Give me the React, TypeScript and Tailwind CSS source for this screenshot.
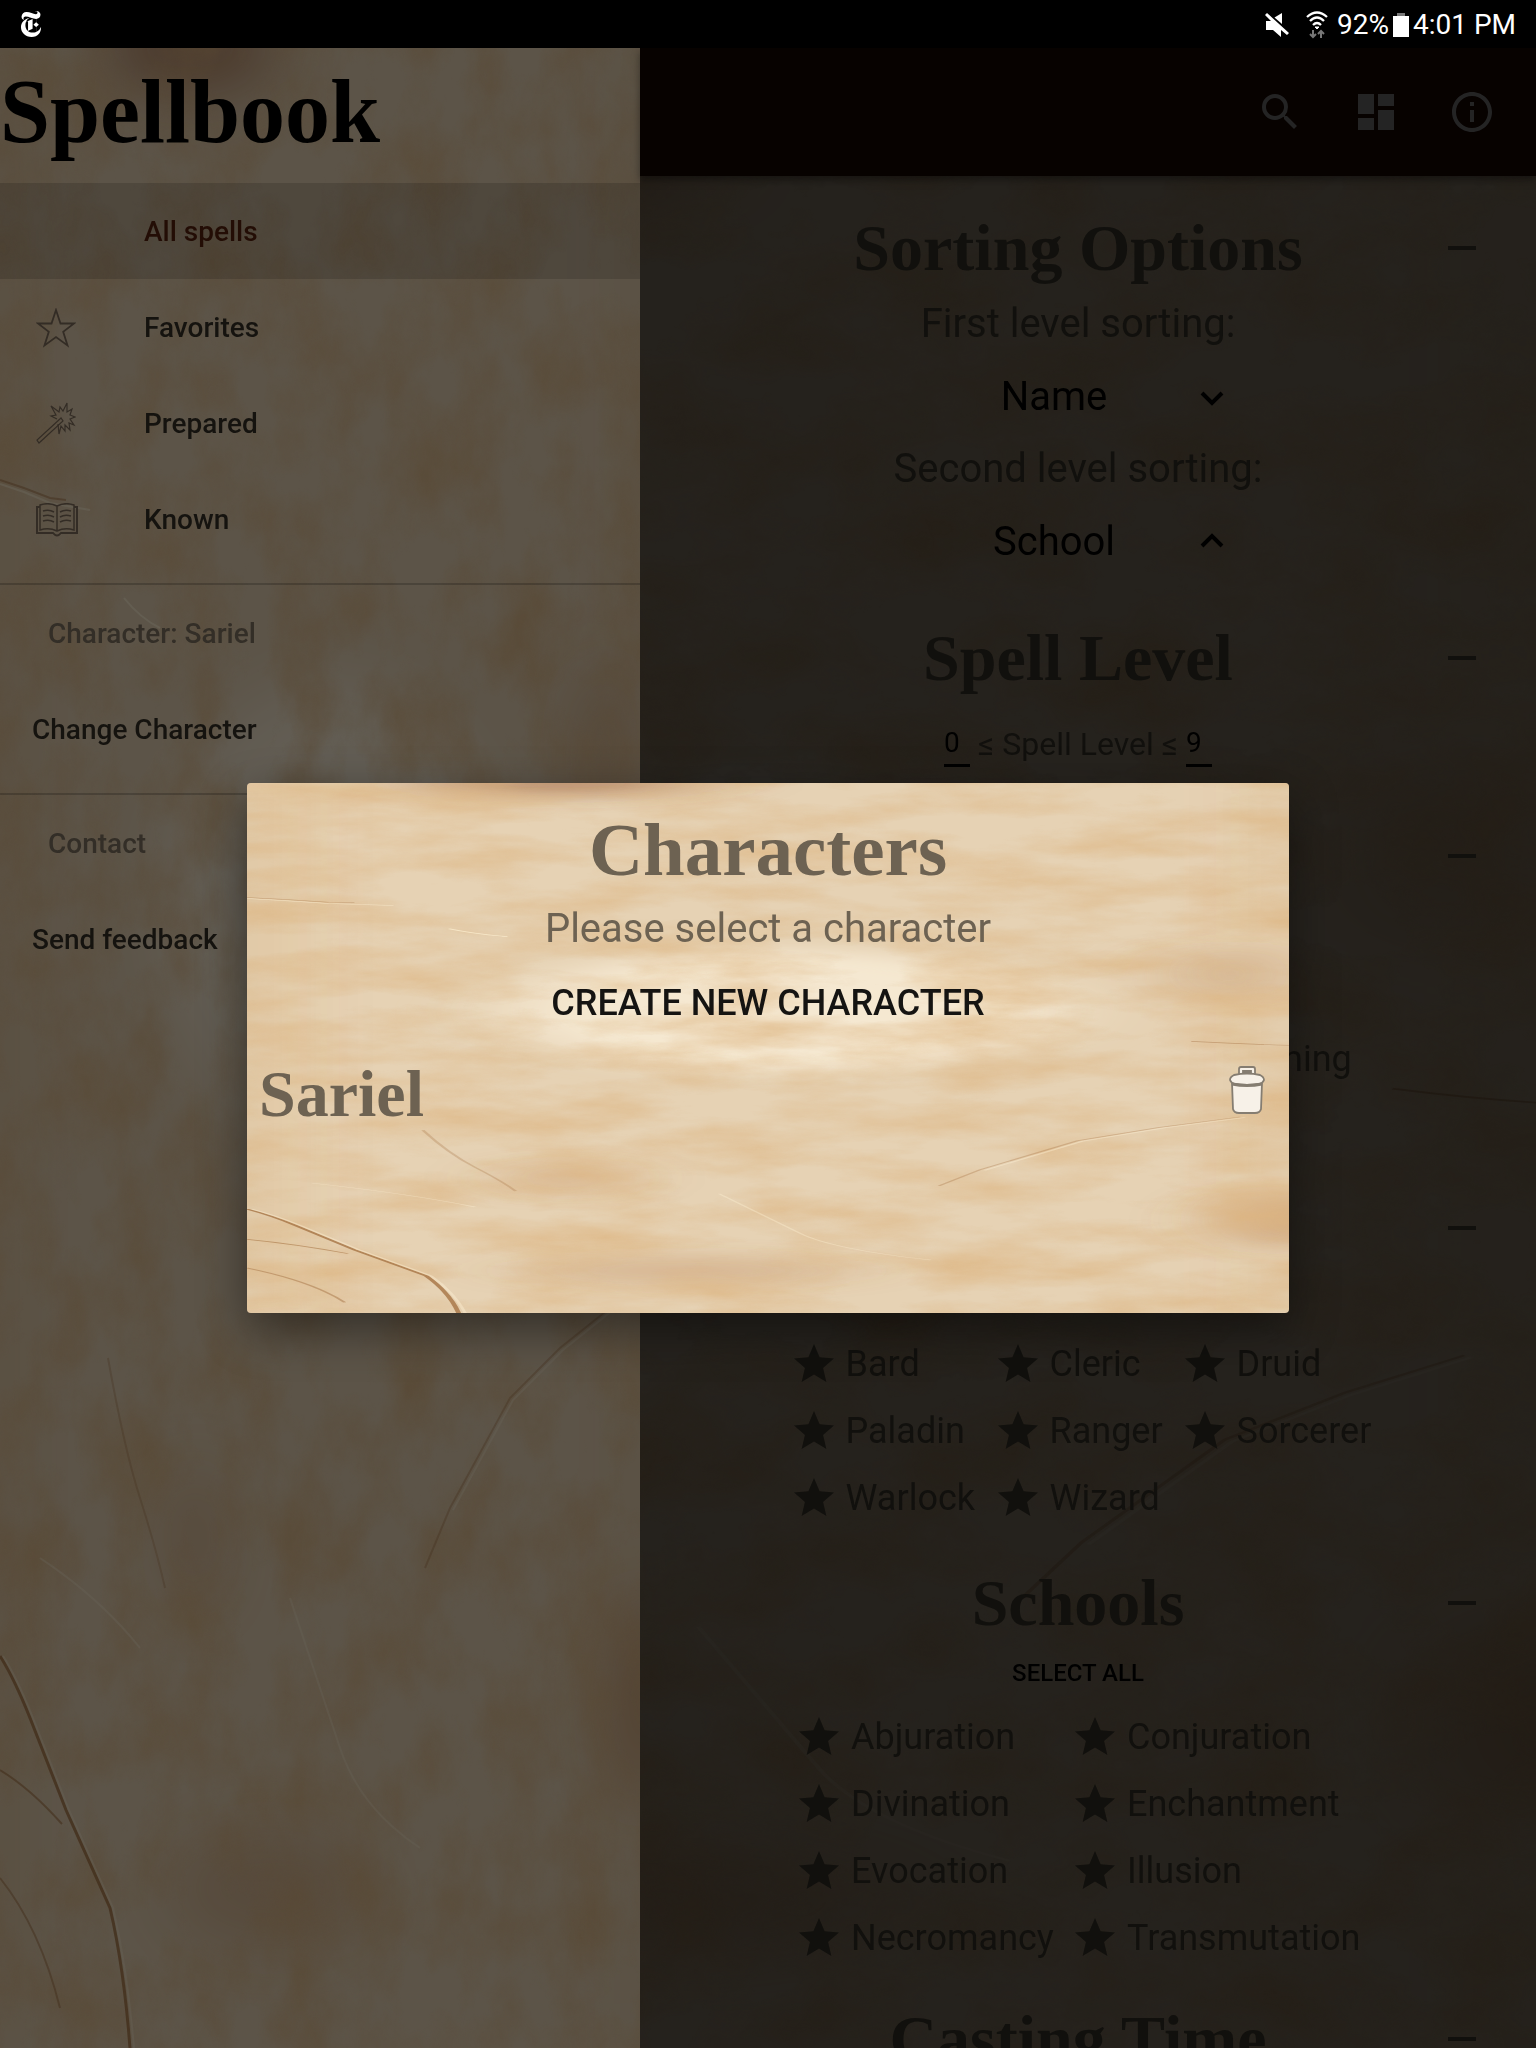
import React from 'react';
import { SiNewyorktimes } from 'react-icons/si';
import { MdSearch, MdDashboard, MdInfoOutline, MdStar } from 'react-icons/md';

const blackletter = "font-['Old_English_Text_MT','Liberation_Serif',serif] font-bold";

function Parchment({ id, dim, grain, size }: { id: string; dim: string; grain: string; size: string }) {
  return (
    <div aria-hidden="true" className="pointer-events-none absolute inset-0 overflow-hidden bg-[#e6d2b4]">
      <svg className={`absolute top-0 right-0 h-full ${size}`} viewBox="0 0 640 2000" preserveAspectRatio="none">
        <defs>
          <filter id={`${id}-grain`} x="0" y="0" width="100%" height="100%">
            <feTurbulence type="fractalNoise" baseFrequency={grain} numOctaves="7" seed="8" />
            <feColorMatrix values="0 0 0 0 0.72  0 0 0 0 0.46  0 0 0 0 0.22  1.3 0 0 0 -0.45" />
          </filter>
          <filter id={`${id}-soft`} x="-50%" y="-50%" width="200%" height="200%">
            <feGaussianBlur stdDeviation="30" />
          </filter>
        </defs>
        <g filter={`url(#${id}-soft)`}>
          <ellipse cx="330" cy="860" rx="170" ry="230" fill="#fff6e4" opacity=".6" />
          <ellipse cx="190" cy="0" rx="90" ry="50" fill="#94542a" opacity=".5" />
          <ellipse cx="195" cy="1490" rx="20" ry="70" fill="#b3723a" opacity=".4" />
          <ellipse cx="600" cy="720" rx="26" ry="110" fill="#b3723a" opacity=".35" />
          <ellipse cx="640" cy="1650" rx="30" ry="110" fill="#b3723a" opacity=".5" />
          <ellipse cx="270" cy="1840" rx="100" ry="60" fill="#b3723a" opacity=".25" />
          <path d="M0 0H8V2000H0Z" fill="#b0682c" opacity=".6" />
          <path d="M632 0H640V2000H632Z" fill="#b0682c" opacity=".35" />
        </g>
        <rect width="640" height="2000" filter={`url(#${id}-grain)`} />
        <g fill="none" strokeWidth="2" stroke="#a67445">
          <path d="M0 1608Q14 1630 30 1670L66 1762L110 1860Q124 1920 130 2000" opacity=".8" strokeWidth="3" />
          <path d="M0 1722Q30 1740 62 1776" opacity=".6" />
          <path d="M0 1830Q40 1880 60 1960" opacity=".5" />
          <path d="M108 1310Q124 1400 140 1450T165 1540" opacity=".3" />
          <path d="M0 432L24 440L50 450L66 452" opacity=".5" />
          <path d="M610 1260L560 1300L510 1350L450 1460L425 1520" opacity=".35" />
          <path d="M640 990Q610 985 580 975" opacity=".5" />
        </g>
        <g fill="none" strokeWidth="2" stroke="#fff3d6">
          <path d="M3 1608Q17 1630 33 1670L69 1762L113 1860Q127 1920 134 2000" opacity=".4" />
          <path d="M0 436L24 444L50 455L90 462" opacity=".6" />
          <path d="M40 1510Q100 1550 140 1600" opacity=".4" />
          <path d="M124 550Q140 570 160 580" opacity=".7" />
          <path d="M290 1550Q320 1640 340 1700T420 1800" opacity=".35" />
          <path d="M613 1262L563 1302L513 1352L453 1462" opacity=".4" />
        </g>
      </svg>
      <div className={`absolute inset-0 ${dim}`} />
    </div>
  );
}

function StatusBar() {
  return (
    <div className="flex h-12 shrink-0 items-center justify-between bg-black pr-5 pl-[18px] text-white">
      <SiNewyorktimes className="h-[26px] w-[26px]" />
      <div className="flex items-center pt-0.5 font-[Roboto,sans-serif] text-[28px] leading-12">
        <svg className="mr-4 h-6 w-6" viewBox="0 0 24 24" fill="currentColor" aria-label="Muted">
          <path d="M2 0L24 20L22 22L16 17V24L8 17H1V8H6L0 2z" />
          <path d="M17 0V11L9.500 4.500z" />
        </svg>
        <svg className="mr-2 h-7 w-6" viewBox="0 0 24 28" fill="none" stroke="currentColor" strokeWidth="2.300" aria-label="Wi-Fi">
          <path d="M2 6Q12-3 22 6M5 10Q12 3 19 10M8 14Q12 10 16 14" />
          <path d="M10 16h4l-2 2z" fill="currentColor" strokeWidth="1" />
          <path d="M8 19v7M5 23l3 3 3-3M16 27v-7M13 23l3-3 3 3" stroke="#777" strokeWidth="2" />
        </svg>
        <span>92%</span>
        <svg className="mx-1 h-6 w-4" viewBox="0 0 16 24" aria-label="Battery">
          <path d="M4 0h8v3H4z" fill="#777" />
          <path d="M0 3h16v21H0z" fill="currentColor" />
        </svg>
        <span>4:01 PM</span>
      </div>
    </div>
  );
}

function WandIcon() {
  return (
    <svg className="h-11 w-10" viewBox="0 0 40 44" fill="none" stroke="currentColor" strokeWidth="1.200">
      <path d="M25 16L1 38l2 3L27 19z" />
      <path d="M21 17L15 14l5-1-5-9 8 6 1-5 3 4 4-8v9l5-3-2 6 5 2-5 2 4 6-5-2 1 7-5-5v6l-4-5-2 8-1-10" />
    </svg>
  );
}

function BookIcon() {
  return (
    <svg className="h-[34px] w-[42px]" viewBox="0 0 42 34" fill="none" stroke="currentColor" strokeWidth="1.500">
      <path d="M4 2Q13-1 21 3Q29-1 38 2V27Q29 24 21 28Q13 24 4 27zM21 3V28" />
      <path d="M4 4H1V30H17Q21 35 25 30H41V4H38" strokeWidth="2" />
      <path d="M7 8q6-2 11 1M7 13q6-2 11 1M7 18q6-2 11 1M24 9q5-3 11-1M24 14q5-3 11-1M24 19q5-3 11-1" />
    </svg>
  );
}

function StarOutline() {
  return (
    <svg className="h-10 w-10" viewBox="0 0 40 40" fill="none" stroke="currentColor" strokeWidth="1.800">
      <path d="M20 2l4.500 13.500H38L27.200 23.800 31.500 37.500 20 29 8.500 37.500 12.800 23.800 2 15.500h13.500z" />
    </svg>
  );
}

function DrawerItem({ label, icon, active }: { label: string; icon?: React.ReactNode; active?: boolean }) {
  return (
    <a
      href="#"
      className={`flex h-24 items-center pt-0.5 pl-9 text-[28px] font-medium ${active ? 'bg-black/15 text-[#230d05]' : 'text-[#15130f]'}`}
    >
      <span className="w-[108px] shrink-0 text-[#332c25]">{icon}</span>
      {label}
    </a>
  );
}

function DrawerGroup({ title, action }: { title: string; action: string }) {
  return (
    <section className="border-t-2 border-black/20 pb-4">
      <h2 className="flex h-24 items-center pt-0.5 pl-12 text-[28px] font-medium text-[#332e27]">{title}</h2>
      <a href="#" className="flex h-24 items-center pt-0.5 pl-8 text-[28px] font-medium text-[#15130f]">
        {action}
      </a>
    </section>
  );
}

function SectionTitle({ children }: { children?: React.ReactNode }) {
  return (
    <div className="grid h-20 grid-cols-[1fr_auto_1fr] items-center">
      <h2 className={`col-start-2 text-[66px] leading-20 whitespace-nowrap ${blackletter}`}>{children}</h2>
      <button type="button" aria-label="Collapse" className="mr-10 flex h-12 w-7 items-center justify-self-end">
        <span className="h-1 w-7 bg-[#11100d]" />
      </button>
    </div>
  );
}

function SortRow({ label, value, up }: { label: string; value: string; up?: boolean }) {
  const id = label.split(' ')[0];
  return (
    <>
      <label htmlFor={id} className="flex h-[72px] items-center justify-center text-[40px]">
        {label}
      </label>
      <div className="flex h-[73px] items-center justify-center gap-11 pl-11 text-black">
        <select id={id} className="w-[180px] appearance-none bg-transparent text-center text-[40px] leading-[48px]">
          <option>{value}</option>
        </select>
        <button type="button" aria-label="Sort direction" className="w-12">
          <svg className="mx-auto h-6 w-6" viewBox="0 0 24 24" fill="none" stroke="currentColor" strokeWidth="4">
            <path d={up ? 'M2 16L12 6l10 10' : 'M2 8l10 10L22 8'} />
          </svg>
        </button>
      </div>
    </>
  );
}

function Choice({ label }: { label: string }) {
  return (
    <button type="button" aria-pressed="true" className="flex h-[67px] items-center gap-2 text-left text-[36px]">
      <MdStar className="-ml-1 h-12 w-12 shrink-0" />
      {label}
    </button>
  );
}

export default function App() {
  return (
    <div className="relative flex h-screen flex-col overflow-hidden bg-black font-[Roboto,sans-serif]">
      <StatusBar />
      <div className="relative flex min-h-0 flex-1">
        <aside className="relative w-[640px] shrink-0">
          <Parchment id="drawer" dim="bg-black/60" grain="0.018 0.011" size="w-full" />
          <div className="relative">
            <h1 className={`h-[135px] text-[90px] leading-[128px] text-black ${blackletter}`}>Spellbook</h1>
            <nav className="pb-4">
              <DrawerItem label="All spells" active />
              <DrawerItem label="Favorites" icon={<StarOutline />} />
              <DrawerItem label="Prepared" icon={<WandIcon />} />
              <DrawerItem label="Known" icon={<BookIcon />} />
            </nav>
            <DrawerGroup title="Character: Sariel" action="Change Character" />
            <DrawerGroup title="Contact" action="Send feedback" />
          </div>
        </aside>

        <div className="flex min-w-0 flex-1 flex-col">
          <header className="relative z-10 flex h-32 shrink-0 items-center justify-end gap-12 bg-[#070200] pr-10 text-[#242424] shadow-[0_4px_8px_rgba(0,0,0,0.4)]">
            <button type="button" aria-label="Search"><MdSearch className="h-12 w-12" /></button>
            <button type="button" aria-label="Layout"><MdDashboard className="h-12 w-12" /></button>
            <button type="button" aria-label="About"><MdInfoOutline className="h-12 w-12" /></button>
          </header>
          <main className="relative min-h-0 flex-1 overflow-hidden">
            <Parchment id="main" dim="bg-black/84" grain="0.02 0.012" size="w-[171%]" />
            <div className="relative pt-8 pr-5 text-[#11100d]">
              <SectionTitle>Sorting Options</SectionTitle>
              <SortRow label="First level sorting:" value="Name" />
              <SortRow label="Second level sorting:" value="School" up />
              <div className="pt-10">
                <SectionTitle>Spell Level</SectionTitle>
              </div>
              <div className="mt-2 mb-9 flex h-[74px] items-center justify-center gap-2 pt-0.5 text-[32px]">
                <input aria-label="Minimum level" defaultValue="0" className="w-[26px] border-b-3 border-black bg-transparent text-[28px] text-black" />
                <span>≤ Spell Level ≤</span>
                <input aria-label="Maximum level" defaultValue="9" className="w-[26px] border-b-3 border-black bg-transparent text-[28px] text-black" />
              </div>
              <SectionTitle />
              <p className="mt-[130px] pl-[643px] text-[36px] leading-[66px]">ning</p>
              <div className="mt-[96px]">
                <SectionTitle />
              </div>
              <div className="mt-[62px] flex justify-center pl-2">
                <div className="grid grid-cols-[204px_187px_186px]">
                  {['Bard', 'Cleric', 'Druid', 'Paladin', 'Ranger', 'Sorcerer', 'Warlock', 'Wizard'].map((c) => (
                    <Choice key={c} label={c} />
                  ))}
                </div>
              </div>
              <div className="mt-8">
                <SectionTitle>Schools</SectionTitle>
              </div>
              <button type="button" className="mx-auto block h-[60px] text-[24px] font-medium text-black">SELECT ALL</button>
              <div className="flex justify-center pl-2">
                <div className="grid grid-cols-[276px_290px]">
                  {['Abjuration', 'Conjuration', 'Divination', 'Enchantment', 'Evocation', 'Illusion', 'Necromancy', 'Transmutation'].map((c) => (
                    <Choice key={c} label={c} />
                  ))}
                </div>
              </div>
              <div className="mt-7">
                <SectionTitle>Casting Time</SectionTitle>
              </div>
            </div>
          </main>
        </div>

        <div className="absolute inset-0 z-20 flex items-center justify-center px-[247px]">
          <div role="dialog" aria-labelledby="dialog-title" className="relative w-full overflow-hidden rounded shadow-[0_16px_48px_rgba(0,0,0,0.45)]">
            <Parchment id="dialog" dim="bg-transparent" grain="0.012 0.009" size="w-full" />
            <div className="relative flex flex-col items-center pt-5 pb-[170px] text-[#6d6252]">
              <h2 id="dialog-title" className={`text-[75px] leading-[94px] ${blackletter}`}>Characters</h2>
              <p className="text-[40px] leading-[64px]">Please select a character</p>
              <button type="button" className="h-[84px] text-[36px] font-medium text-[#151412]">CREATE NEW CHARACTER</button>
              <div className="flex h-[98px] w-full items-center justify-between pr-6 pl-3">
                <button type="button" className={`text-[66px] leading-[98px] ${blackletter}`}>Sariel</button>
                <button type="button" aria-label="Delete Sariel" className="pb-2">
                  <svg className="h-12 w-9" viewBox="0 0 36 48" fill="#f7f1e8" stroke="#857d71" strokeWidth="1.800">
                    <path d="M3 17L4 43Q5 47 10 47H26Q31 47 32 43L33 17z" />
                    <path d="M10 10V3Q10 1 12 1H24Q26 1 26 3V10z" />
                    <path d="M14 5h8v5h-8z" fill="#857d71" />
                    <path d="M5 9Q18 6 31 9Q35 11 35 14Q34 17 30 18Q18 20 6 18Q2 17 1 14Q1 11 5 9z" />
                    <path d="M3 18Q18 21 33 18" fill="none" strokeWidth="3" />
                  </svg>
                </button>
              </div>
            </div>
          </div>
        </div>
      </div>
    </div>
  );
}
